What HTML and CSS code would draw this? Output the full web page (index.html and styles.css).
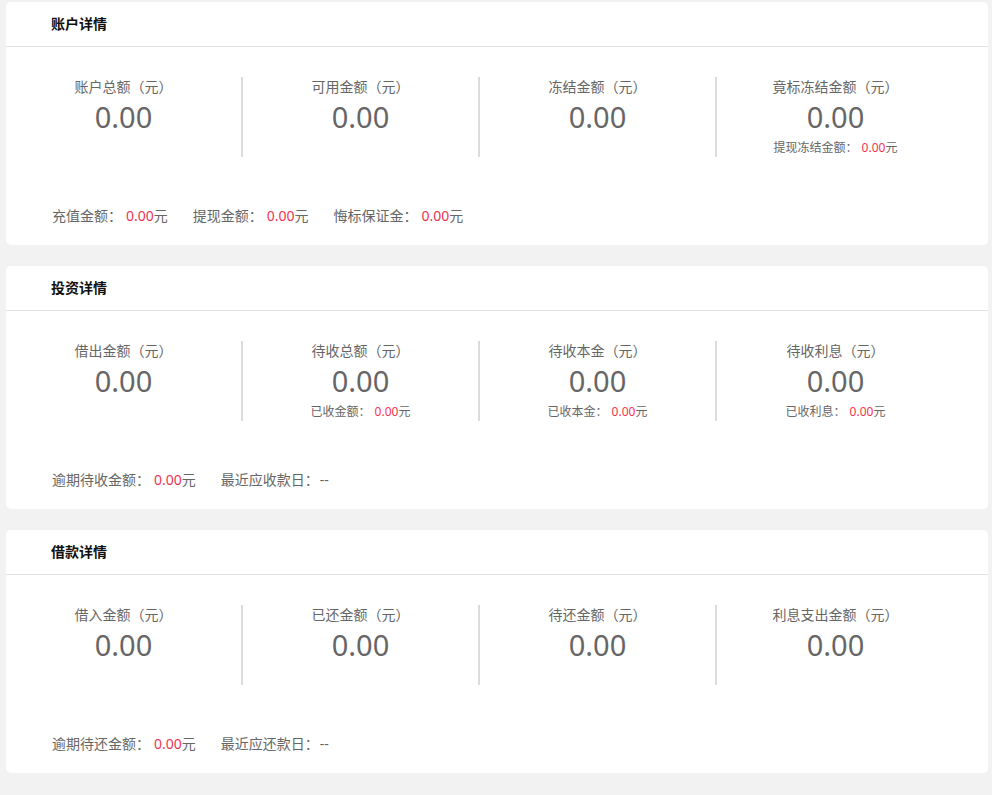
FILE: index.html
```html
<!DOCTYPE html>
<html lang="zh-CN">
<head>
<meta charset="utf-8">
<title>账户详情</title>
<link rel="stylesheet" href="styles.css">
</head>
<body>
<div class="page">
  <section class="card">
    <div class="card-head">账户详情</div>
    <div class="stats">
      <div class="stat">
        <div class="stat-label">账户总额（元）</div>
        <div class="stat-value">0.00</div>
      </div>
      <div class="stat">
        <div class="stat-label">可用金额（元）</div>
        <div class="stat-value">0.00</div>
      </div>
      <div class="stat">
        <div class="stat-label">冻结金额（元）</div>
        <div class="stat-value">0.00</div>
      </div>
      <div class="stat">
        <div class="stat-label">竟标冻结金额（元）</div>
        <div class="stat-value">0.00</div>
        <div class="stat-sub">提现冻结金额：<span class="red">0.00</span>元</div>
      </div>
    </div>
    <div class="foot">
      <span class="foot-item">充值金额：<span class="red">0.00</span>元</span>
      <span class="foot-item">提现金额：<span class="red">0.00</span>元</span>
      <span class="foot-item">悔标保证金：<span class="red">0.00</span>元</span>
    </div>
  </section>

  <section class="card">
    <div class="card-head">投资详情</div>
    <div class="stats">
      <div class="stat">
        <div class="stat-label">借出金额（元）</div>
        <div class="stat-value">0.00</div>
      </div>
      <div class="stat">
        <div class="stat-label">待收总额（元）</div>
        <div class="stat-value">0.00</div>
        <div class="stat-sub">已收金额：<span class="red">0.00</span>元</div>
      </div>
      <div class="stat">
        <div class="stat-label">待收本金（元）</div>
        <div class="stat-value">0.00</div>
        <div class="stat-sub">已收本金：<span class="red">0.00</span>元</div>
      </div>
      <div class="stat">
        <div class="stat-label">待收利息（元）</div>
        <div class="stat-value">0.00</div>
        <div class="stat-sub">已收利息：<span class="red">0.00</span>元</div>
      </div>
    </div>
    <div class="foot">
      <span class="foot-item">逾期待收金额：<span class="red">0.00</span>元</span>
      <span class="foot-item">最近应收款日：<span class="dash">--</span></span>
    </div>
  </section>

  <section class="card">
    <div class="card-head">借款详情</div>
    <div class="stats">
      <div class="stat">
        <div class="stat-label">借入金额（元）</div>
        <div class="stat-value">0.00</div>
      </div>
      <div class="stat">
        <div class="stat-label">已还金额（元）</div>
        <div class="stat-value">0.00</div>
      </div>
      <div class="stat">
        <div class="stat-label">待还金额（元）</div>
        <div class="stat-value">0.00</div>
      </div>
      <div class="stat">
        <div class="stat-label">利息支出金额（元）</div>
        <div class="stat-value">0.00</div>
      </div>
    </div>
    <div class="foot">
      <span class="foot-item">逾期待还金额：<span class="red">0.00</span>元</span>
      <span class="foot-item">最近应还款日：<span class="dash">--</span></span>
    </div>
  </section>
</div>
</body>
</html>
```

FILE: styles.css
```css
html, body {
  margin: 0;
  padding: 0;
  background: #f2f2f2;
}

body {
  font-family: "Noto Sans", "Noto Sans CJK SC", sans-serif;
  color: #666;
}

.page {
  padding: 2px 4px 0 6px;
}

.card {
  background: #fff;
  border-radius: 5px;
  height: 243px;
  margin-bottom: 21px;
  box-sizing: border-box;
}

.card-head {
  height: 44px;
  line-height: 44px;
  padding-left: 45px;
  font-size: 14px;
  font-weight: bold;
  color: #111;
  border-bottom: 1px solid #e2e2e2;
}

.stats {
  display: grid;
  grid-template-columns: repeat(4, 237px);
  margin-top: 30px;
}

.stat {
  height: 80px;
  box-sizing: border-box;
  border-right: 2px solid #dcdcdc;
  text-align: center;
}

.stat:last-child {
  border-right: none;
}

.stat-label {
  font-size: 14px;
  line-height: 20px;
  color: #666;
}

.stat-value {
  font-size: 29px;
  line-height: 40px;
  color: #666;
}

.stat-sub {
  font-size: 12px;
  line-height: 22px;
  color: #666;
}

.stat-sub .red {
  margin-left: 4px;
}

.red {
  color: #f5334f;
}

.foot {
  display: flex;
  margin-top: 49px;
  padding-left: 46px;
  font-size: 14px;
  line-height: 20px;
  color: #666;
}

.foot-item {
  margin-right: 25px;
}

.foot-item .red {
  margin-left: 4px;
}

.dash {
  margin-left: 1px;
}
```
